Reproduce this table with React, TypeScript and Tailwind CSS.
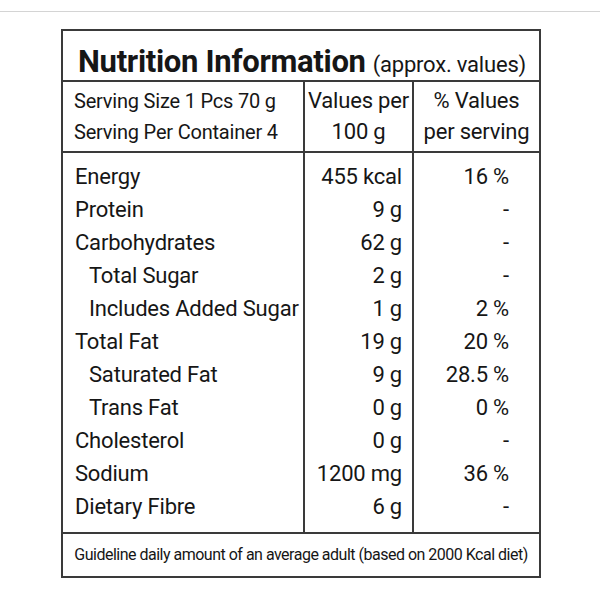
const rows = [
  { name: 'Energy', value: '455 kcal', pct: '16 %', indent: false },
  { name: 'Protein', value: '9 g', pct: '-', indent: false },
  { name: 'Carbohydrates', value: '62 g', pct: '-', indent: false },
  { name: 'Total Sugar', value: '2 g', pct: '-', indent: true },
  { name: 'Includes Added Sugar', value: '1 g', pct: '2 %', indent: true },
  { name: 'Total Fat', value: '19 g', pct: '20 %', indent: false },
  { name: 'Saturated Fat', value: '9 g', pct: '28.5 %', indent: true },
  { name: 'Trans Fat', value: '0 g', pct: '0 %', indent: true },
  { name: 'Cholesterol', value: '0 g', pct: '-', indent: false },
  { name: 'Sodium', value: '1200 mg', pct: '36 %', indent: false },
  { name: 'Dietary Fibre', value: '6 g', pct: '-', indent: false },
]

export default function App() {
  return (
    <div
      className="w-[600px] h-[600px] bg-white text-[#161616] pt-[11px]"
      style={{ fontFamily: 'Roboto, "Open Sans", sans-serif' }}
    >
      <div className="h-px bg-[#d4d4d4]" />

      <div className="ml-[61px] mt-[17px] w-[480px] border-2 border-[#3a3a3a]">
        {/* title */}
        <div className="h-[51px] border-b-2 border-[#3a3a3a] flex items-baseline pl-[15px] pt-[8px] whitespace-nowrap">
          <span className="text-[31px] font-bold tracking-[-0.3px]">Nutrition Information</span>
          <span className="ml-[7px] text-[22px] tracking-[-0.2px]">(approx. values)</span>
        </div>

        {/* serving header */}
        <div className="grid grid-cols-[240px_109px_1fr] border-b-2 border-[#3a3a3a] h-[71px]">
          <div className="pl-[11px] pt-[4px] text-[20px] leading-[31px] tracking-[-0.2px] whitespace-nowrap">
            <div>Serving Size 1 Pcs 70 g</div>
            <div>Serving Per Container 4</div>
          </div>
          <div className="border-l-2 border-[#3a3a3a] pt-[3px] text-[22px] leading-[31px] tracking-[-0.2px] text-center whitespace-nowrap">
            <div>Values per</div>
            <div>100 g</div>
          </div>
          <div className="border-l-2 border-[#3a3a3a] pt-[3px] text-[22px] leading-[31px] tracking-[-0.2px] text-center whitespace-nowrap">
            <div>% Values</div>
            <div>per serving</div>
          </div>
        </div>

        {/* body */}
        <div className="grid grid-cols-[240px_109px_1fr] border-b-2 border-[#3a3a3a] text-[22px] leading-[33px] tracking-[-0.2px] whitespace-nowrap">
          <div className="pl-[12px] pt-[7px] pb-[9px]">
            {rows.map((r) => (
              <div key={r.name} className={r.indent ? 'pl-[14px]' : ''}>
                {r.name}
              </div>
            ))}
          </div>
          <div className="border-l-2 border-[#3a3a3a] pr-[10px] pt-[7px] pb-[9px] text-right">
            {rows.map((r) => (
              <div key={r.name}>{r.value}</div>
            ))}
          </div>
          <div className="border-l-2 border-[#3a3a3a] pr-[30px] pt-[7px] pb-[9px] text-right">
            {rows.map((r) => (
              <div key={r.name}>{r.pct}</div>
            ))}
          </div>
        </div>

        {/* footer */}
        <div className="h-[42px] flex items-center justify-center whitespace-nowrap">
          <span className="text-[16px] tracking-[-0.5px]">
            Guideline daily amount of an average adult (based on 2000 Kcal diet)
          </span>
        </div>
      </div>
    </div>
  )
}
